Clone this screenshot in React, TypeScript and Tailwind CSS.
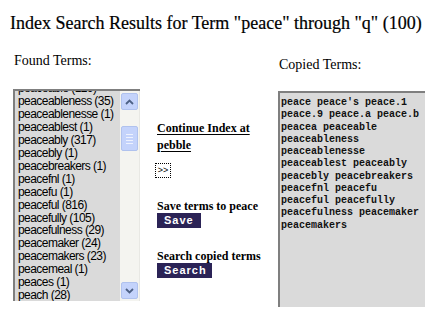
import React from "react";

const found = [
  "peaceable (129)",
  "peaceableness (35)",
  "peaceablenesse (1)",
  "peaceablest (1)",
  "peaceably (317)",
  "peacebly (1)",
  "peacebreakers (1)",
  "peacefnl (1)",
  "peacefu (1)",
  "peaceful (816)",
  "peacefully (105)",
  "peacefulness (29)",
  "peacemaker (24)",
  "peacemakers (23)",
  "peacemeal (1)",
  "peaces (1)",
  "peach (28)",
];

const copied = [
  "peace peace's peace.1",
  "peace.9 peace.a peace.b",
  "peacea peaceable",
  "peaceableness",
  "peaceablenesse",
  "peaceablest peaceably",
  "peacebly peacebreakers",
  "peacefnl peacefu",
  "peaceful peacefully",
  "peacefulness peacemaker",
  "peacemakers",
];

function Chevron({ up }: { up?: boolean }) {
  return (
    <svg width="9" height="6" viewBox="0 0 9 6">
      <path
        d={up ? "M1 5 L4.5 1.5 L8 5" : "M1 1 L4.5 4.5 L8 1"}
        fill="none"
        stroke="#4d6185"
        strokeWidth="1.8"
      />
    </svg>
  );
}

export default function App() {
  return (
    <div className="w-[440px] h-[315px] bg-white overflow-hidden text-black font-['Liberation_Serif','Times_New_Roman',serif]">
      <div className="pt-[11px] pl-[10px] text-[18px] leading-[24px] whitespace-nowrap [-webkit-text-stroke:0.2px_black]">
        Index Search Results for Term "peace" through "q" (100)
      </div>
      <div className="flex mt-[18px]">
        {/* Found terms column */}
        <div className="ml-[13px] w-[127px] flex flex-col">
          <div className="pl-[1px] text-[14px] leading-[16px]">Found Terms:</div>
          <div className="mt-[20px] h-[212px] flex border-t-2 border-l-2 border-[#7f7f7f] bg-[#dadada]">
            <div className="flex-1 overflow-hidden">
              <div className="-mt-[9px] pl-[3px] font-['Liberation_Sans',Arial,sans-serif] text-[12px] leading-[12.95px] tracking-[-0.55px] whitespace-nowrap">
                {found.map((t) => (
                  <div key={t}>{t}</div>
                ))}
              </div>
            </div>
            <div className="w-[20px] bg-[#f4f4f0] border-r border-[#e8e8e4] flex flex-col items-center pt-[2px] pb-[2px]">
              <div className="w-[17px] h-[17px] rounded-[2px] bg-[#c4d3fb] border border-[#b0c2ee] flex items-center justify-center">
                <Chevron up />
              </div>
              <div className="mt-[16px] w-[17px] h-[25px] rounded-[2px] bg-[#c4d3fb] border border-[#b0c2ee] flex flex-col items-center justify-center gap-[2px]">
                <div className="w-[7px] h-px bg-[#eef2fe]" />
                <div className="w-[7px] h-px bg-[#eef2fe]" />
                <div className="w-[7px] h-px bg-[#eef2fe]" />
                <div className="w-[7px] h-px bg-[#eef2fe]" />
              </div>
              <div className="flex-1" />
              <div className="w-[17px] h-[17px] rounded-[2px] bg-[#c4d3fb] border border-[#b0c2ee] flex items-center justify-center">
                <Chevron />
              </div>
            </div>
          </div>
        </div>

        {/* Middle column */}
        <div className="ml-[17px] w-[118px] flex flex-col items-start pt-[67px] font-bold text-[12px] leading-[17px]">
          <a className="underline decoration-1 underline-offset-[2px]">Continue Index at</a>
          <a className="underline decoration-1 underline-offset-[2px]">pebble</a>
          <div className="mt-[9px] -ml-[2px] w-[16px] h-[15px] border border-dotted border-black bg-white flex items-center justify-center font-['Liberation_Sans',Arial,sans-serif] font-normal text-[9px] leading-none">
            &gt;&gt;
          </div>
          <div className="mt-[21px] leading-[14px]">Save terms to peace</div>
          <div className="mt-[0px] w-[44px] h-[15px] bg-[#2b2356] text-white font-['Liberation_Sans',Arial,sans-serif] font-bold text-[11px] leading-[15px] tracking-[1px] pl-[7px]">
            Save
          </div>
          <div className="mt-[21px] leading-[14px]">Search copied terms</div>
          <div className="mt-[0px] w-[55px] h-[15px] bg-[#2b2356] text-white font-['Liberation_Sans',Arial,sans-serif] font-bold text-[11px] leading-[15px] tracking-[1px] pl-[7px]">
            Search
          </div>
        </div>

        {/* Copied terms column */}
        <div className="ml-[3px] w-[147px] flex flex-col">
          <div className="pl-[1px] mt-[4px] text-[14px] leading-[16px]">Copied Terms:</div>
          <div className="mt-[18px] h-[216px] border-t-2 border-l-2 border-[#7f7f7f] bg-[#dadada] pl-[1px] pt-[4px] font-['Liberation_Mono','Courier_New',monospace] font-bold text-[10px] leading-[12.25px] whitespace-pre text-[#111]">
            {copied.map((t) => (
              <div key={t}>{t}</div>
            ))}
          </div>
        </div>
      </div>
    </div>
  );
}
